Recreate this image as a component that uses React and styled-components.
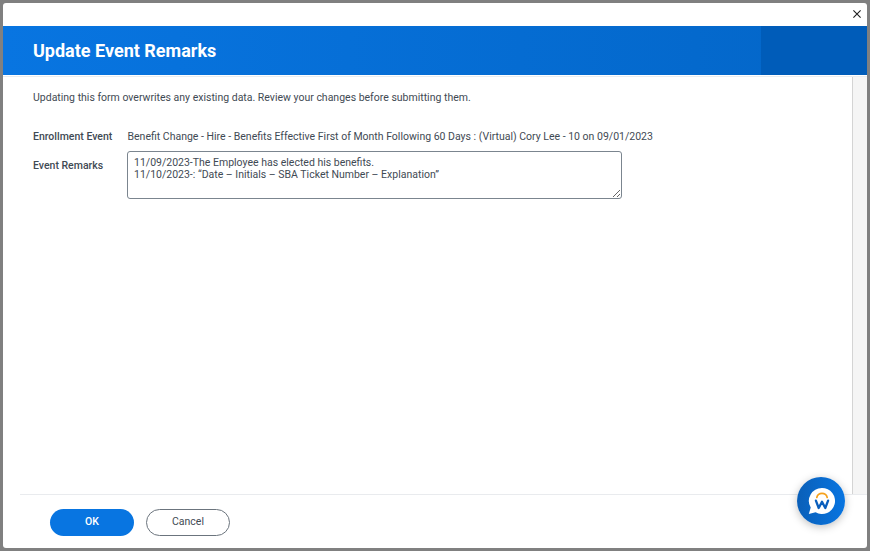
import React from "react";
import styled, { createGlobalStyle } from "styled-components";

const GlobalStyle = createGlobalStyle`
  html, body {
    margin: 0;
    padding: 0;
    height: 100%;
    background: #808080;
  }
  * {
    box-sizing: border-box;
  }
`;

const App = () => {
  return (
    <>
      <GlobalStyle />
      <Page>
        <Dialog>
          <TopBar>
            <CloseButton aria-label="Close">
              <svg width="8" height="8" viewBox="0 0 8 8">
                <path d="M0.4 0.4L7.6 7.6M7.6 0.4L0.4 7.6" stroke="#1e1e1e" strokeWidth="1.1" fill="none" />
              </svg>
            </CloseButton>
          </TopBar>
          <Header>
            <Title>Update Event Remarks</Title>
            <HeaderShade />
          </Header>
          <Body>
            <Content>
              <Notice>Updating this form overwrites any existing data. Review your changes before submitting them.</Notice>
              <Row>
                <Label>Enrollment Event</Label>
                <Value>Benefit Change - Hire - Benefits Effective First of Month Following 60 Days : (Virtual) Cory Lee - 10 on 09/01/2023</Value>
              </Row>
              <FieldRow>
                <FieldLabel>Event Remarks</FieldLabel>
                <Remarks
                  readOnly
                  value={"11/09/2023-The Employee has elected his benefits.\n11/10/2023-: \u201CDate \u2013 Initials \u2013 SBA Ticket Number \u2013 Explanation\u201D"}
                />
              </FieldRow>
            </Content>
            <Scrollbar />
          </Body>
          <Footer>
            <PrimaryButton>OK</PrimaryButton>
            <SecondaryButton>Cancel</SecondaryButton>
          </Footer>
          <ChatBubble aria-label="Help">
            <svg width="30" height="30" viewBox="0 0 30 30">
              <path d="M16 2a13 13 0 1 1-6.4 24.3L2.8 28l1.9-6.4A13 13 0 0 1 16 2z" fill="#fff" />
              <path d="M10.8 11.4a5.4 5.4 0 0 1 10.4 0" stroke="#f5a11c" strokeWidth="1.7" fill="none" strokeLinecap="round" />
              <path d="M9.9 14.6l2.8 7.4 3.3-6.2 3.3 6.2 2.8-7.4" stroke="#0a5fbd" strokeWidth="2.3" fill="none" strokeLinejoin="round" strokeLinecap="round" />
            </svg>
          </ChatBubble>
        </Dialog>
      </Page>
    </>
  );
};

export default App;

const Page = styled.div`
  width: 870px;
  height: 551px;
  padding: 3px;
  background: #808080;
  font-family: Roboto, "Liberation Sans", sans-serif;
`;

const Dialog = styled.div`
  position: relative;
  width: 864px;
  height: 545px;
  display: flex;
  flex-direction: column;
  background: #fff;
  border-radius: 3px;
  overflow: hidden;
`;

const TopBar = styled.div`
  height: 23px;
  flex: none;
  display: flex;
  justify-content: flex-end;
  align-items: flex-start;
  padding: 7px 6px 0 0;
`;

const CloseButton = styled.button`
  width: 8px;
  height: 8px;
  padding: 0;
  border: none;
  background: none;
  display: flex;
`;

const Header = styled.div`
  position: relative;
  height: 49px;
  flex: none;
  display: flex;
  align-items: center;
  padding: 0 30px 1px;
  background: linear-gradient(90deg, #0875e1 0%, #0366c8 100%);
`;

const HeaderShade = styled.div`
  position: absolute;
  top: 0;
  right: 0;
  bottom: 0;
  width: 106px;
  background: #005cb9;
`;

const Title = styled.h1`
  margin: 0;
  font-size: 18px;
  font-weight: 700;
  color: #fff;
`;

const Body = styled.div`
  flex: 1;
  min-height: 0;
  display: flex;
  margin-top: 1px;
  border-top: 1px solid #e8ecf0;
`;

const Content = styled.div`
  flex: 1;
  padding: 14px 0 0 30px;
  font-size: 10.5px;
  color: #3f4a54;
`;

const Notice = styled.p`
  margin: 0 0 25px;
  line-height: 14px;
`;

const Row = styled.div`
  display: flex;
  line-height: 14px;
  margin-bottom: 7px;
`;

const FieldRow = styled(Row)`
  margin-bottom: 0;
`;

const Label = styled.div`
  width: 94px;
  flex: none;
  font-weight: 500;
`;

const FieldLabel = styled(Label)`
  padding-top: 8px;
`;

const Value = styled.div`
  white-space: nowrap;
  margin-left: 0.5px;
`;

const Remarks = styled.textarea`
  width: 495px;
  height: 48px;
  padding: 5px 6px;
  border: 1px solid #7b858f;
  border-radius: 3px;
  outline: none;
  font-family: inherit;
  font-size: 10.5px;
  line-height: 12px;
  color: #3f4a54;
  resize: both;
`;

const Scrollbar = styled.div`
  width: 15px;
  flex: none;
  background: #f5f5f5;
  border-left: 1px solid #d4d4d4;
`;

const Footer = styled.div`
  height: 54px;
  flex: none;
  margin-left: 17px;
  padding: 2px 0 0 30px;
  display: flex;
  align-items: center;
  gap: 12px;
  border-top: 1px solid #e9ebee;
`;

const PrimaryButton = styled.button`
  width: 84px;
  height: 27px;
  padding: 0 0 2px;
  border: none;
  border-radius: 14px;
  background: #0875e1;
  color: #fff;
  font-family: inherit;
  font-size: 10.5px;
  font-weight: 500;
`;

const SecondaryButton = styled.button`
  width: 84px;
  height: 27px;
  padding: 0 0 2px;
  border: 1px solid #6b747d;
  border-radius: 14px;
  background: #fff;
  color: #3f4a54;
  font-family: inherit;
  font-size: 10.5px;
  font-weight: 400;
`;

const ChatBubble = styled.button`
  position: absolute;
  left: 794px;
  top: 474px;
  width: 48px;
  height: 48px;
  padding: 0;
  border: none;
  border-radius: 50%;
  background: linear-gradient(90deg, #0a5fb8, #0875e1);
  box-shadow: 0 2px 8px rgba(0, 0, 0, 0.25);
  display: flex;
  align-items: center;
  justify-content: center;
`;
